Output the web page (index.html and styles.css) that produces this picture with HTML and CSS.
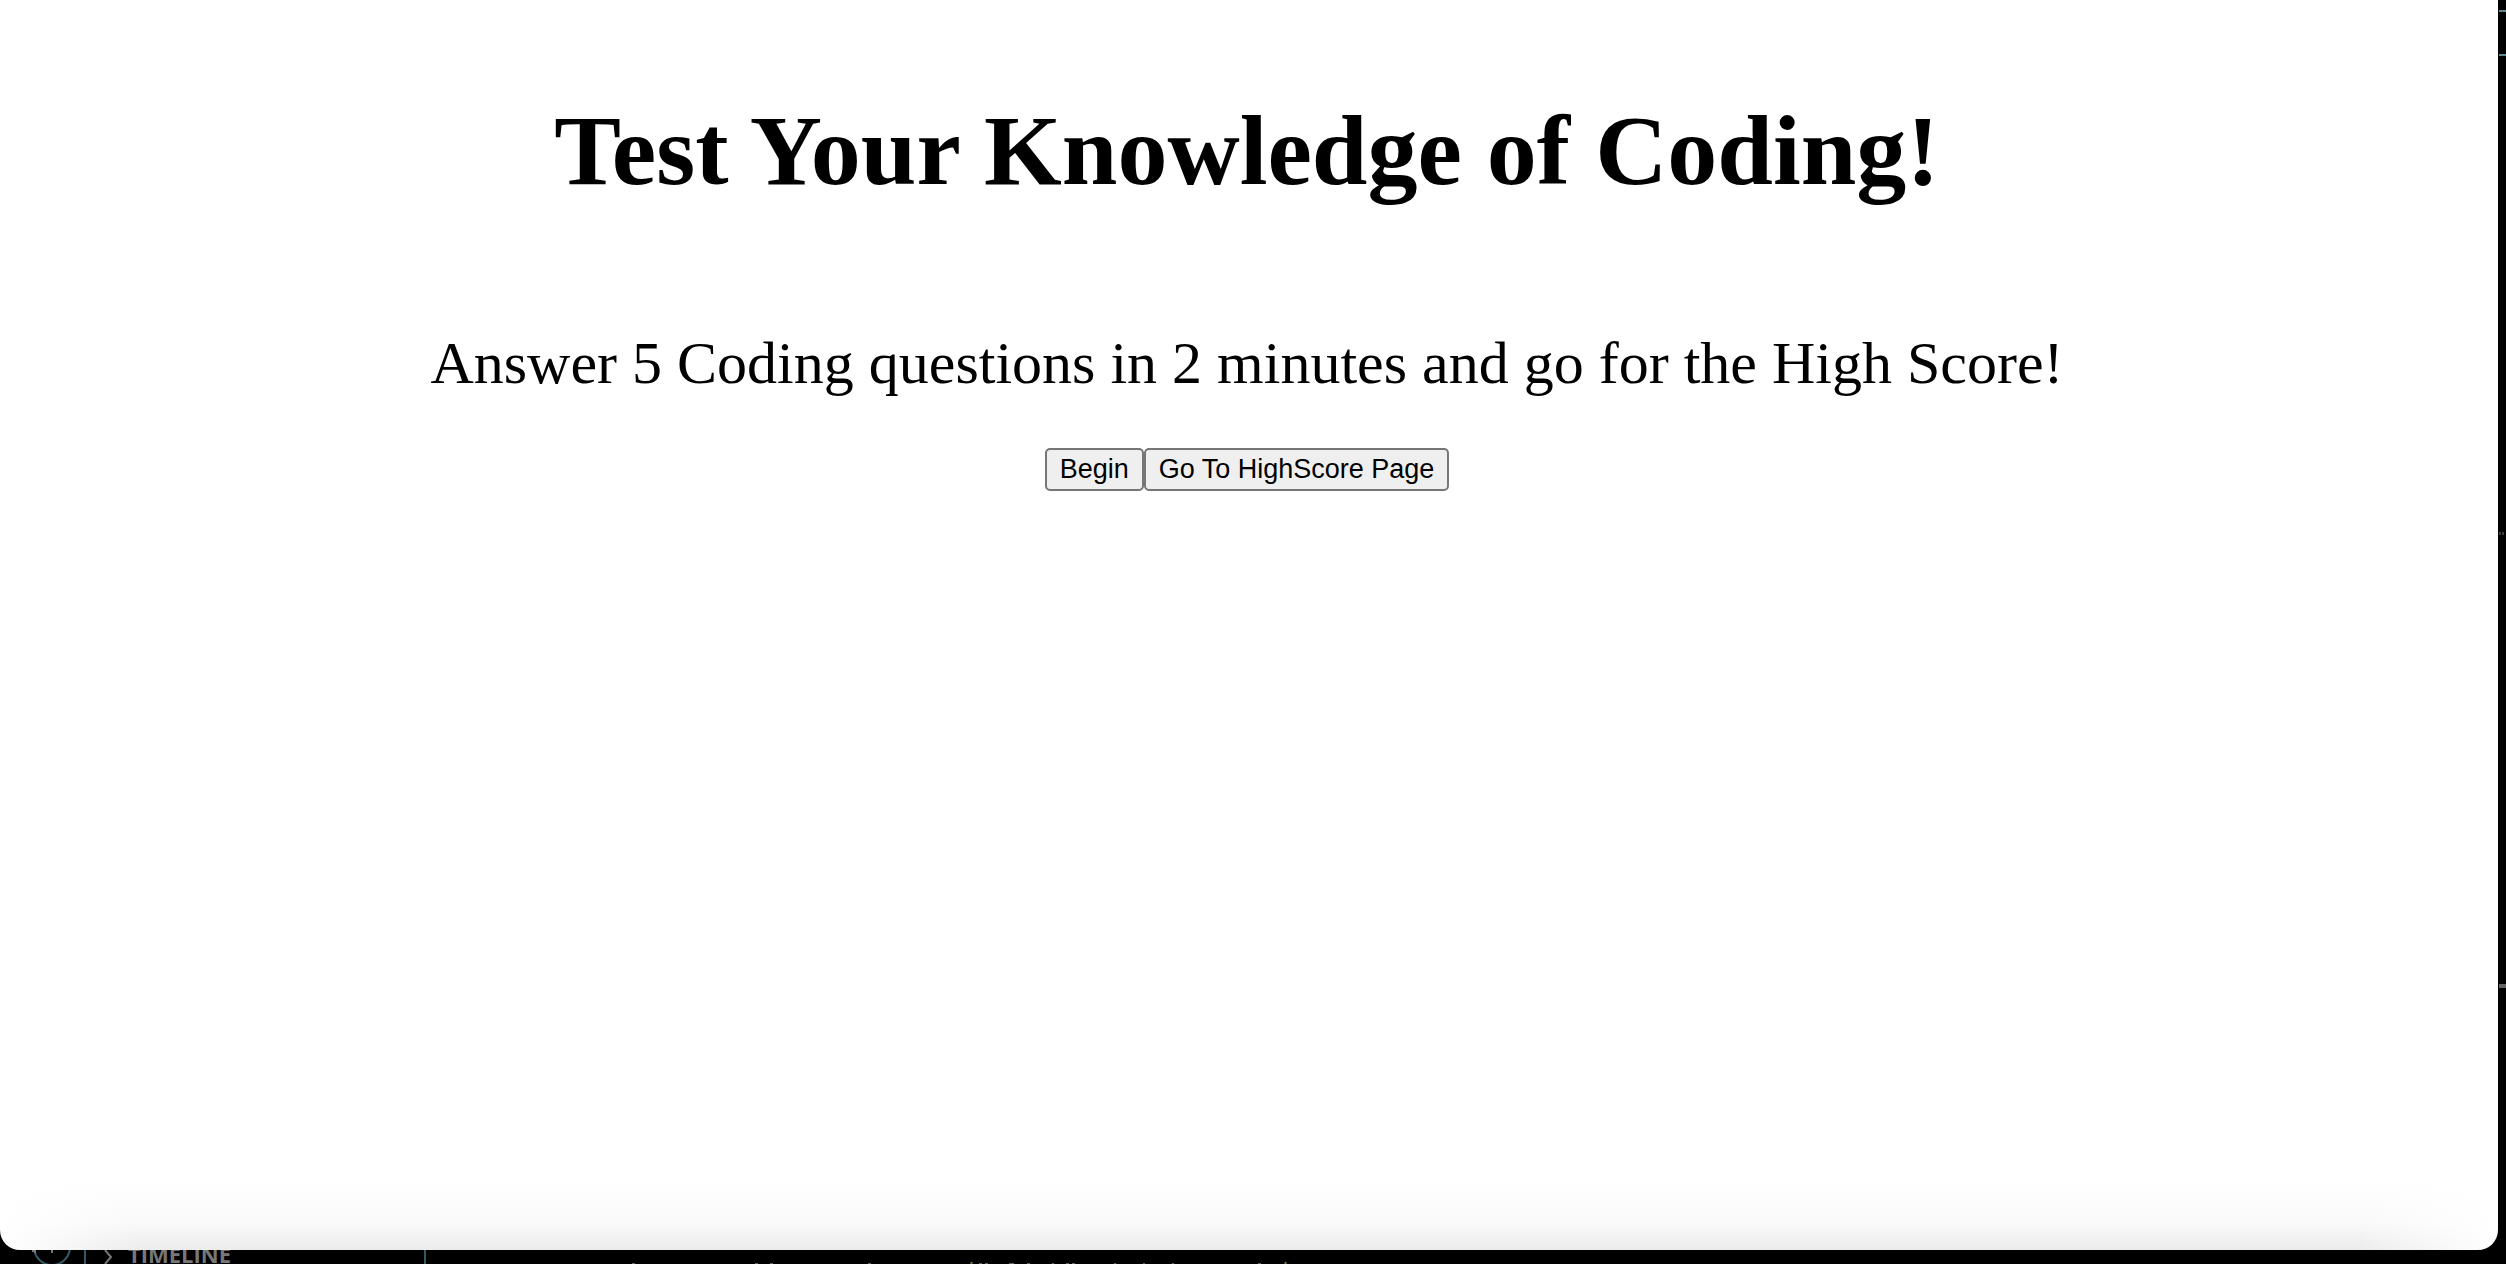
FILE: index.html
```html
<!DOCTYPE html>
<html lang="en">
<head>
<meta charset="utf-8">
<title>Coding Quiz</title>
<link rel="stylesheet" href="styles.css">
</head>
<body>
<div class="window">
<main class="page">
<h1 class="title">Test Your Knowledge of Coding!</h1>
<p class="intro">Answer 5 Coding questions in 2 minutes and go for the High Score!</p>
<div class="actions"><button class="btn" type="button">Begin</button><button class="btn" type="button">Go To HighScore Page</button></div>
</main>
<svg class="edge" viewBox="0 0 8 1250" width="8" height="1250" aria-hidden="true">
<path d="M1 11H8M1 55H8" stroke="#5f8991" stroke-width="2"/>
<path d="M1 533.500H7" stroke="#403b3d" stroke-width="3" stroke-dasharray="2 1"/>
<path d="M1 986H8" stroke="#636363" stroke-width="4"/>
</svg>
</div>
<footer class="status">
<svg class="tools" viewBox="0 0 128 14" width="128" height="14" fill="none" aria-hidden="true">
<circle cx="52" cy="-3" r="18" stroke="#355866" stroke-width="2"/>
<path d="M32 1h3v2M52 0v3" stroke="#777" stroke-width="2"/>
<path d="M85 0V14" stroke="#355866" stroke-width="2"/>
<path d="M105 0L111 7L105 14" stroke="#777" stroke-width="2"/>
</svg>
<span class="label">TIMELINE</span>
<svg class="code" viewBox="240 0 1100 14" width="1100" height="14" fill="none" aria-hidden="true">
<path d="M425 0V14" stroke="#355866" stroke-width="2"/>
<path d="M632 14h3M755 14h3M770 14h3M868 14h3M979 14h3M985 14h3M1009 14h5M1027 14h3M1052 14h2M1066 14h3M1072 14h3M1114 14h2M1143 14h2M1172 14h2M1258 14h3" stroke="#666" stroke-width="2"/>
<path d="M972 12L971 14M1285 12L1286 14" stroke="#81733d" stroke-width="2"/>
</svg>
</footer>
</body>
</html>
```
FILE: styles.css
```css
* { box-sizing: border-box; }

body {
  margin: 0;
  min-height: 100vh;
  display: flex;
  flex-direction: column;
  background: #000;
  overflow: hidden;
}

.window {
  flex: 1;
  display: flex;
}

.page {
  flex: 1;
  padding-right: 4px;
  display: flex;
  flex-direction: column;
  align-items: center;
  background:
    linear-gradient(90deg, #fff, #fff0 140px, #fff0 calc(100% - 140px), #fff),
    linear-gradient(#fff calc(100% - 68px), #f9f9f9 calc(100% - 26px), #ececec);
  border-radius: 0 0 20px 20px;
  font-family: "Liberation Serif", serif;
  color: #000;
}

.title {
  margin: 95px 0 0;
  font-size: 100px;
  line-height: 112px;
}

.intro {
  margin: 120px 0 0;
  font-size: 60px;
  line-height: 72px;
}

.actions {
  display: flex;
  margin-top: 49px;
}

.btn {
  height: 43px;
  padding: 0 13px;
  border: 2px solid #767676;
  border-radius: 5px;
  background: #efefef;
  font: 27px "Liberation Sans", sans-serif;
  color: #000;
}

.edge { flex: none; }

.status {
  height: 14px;
  display: flex;
  align-items: flex-start;
  overflow: hidden;
}

.tools, .code { flex: none; }

.label {
  width: 112px;
  font: 700 22px/8px "Open Sans", sans-serif;
  color: #777;
}
```
